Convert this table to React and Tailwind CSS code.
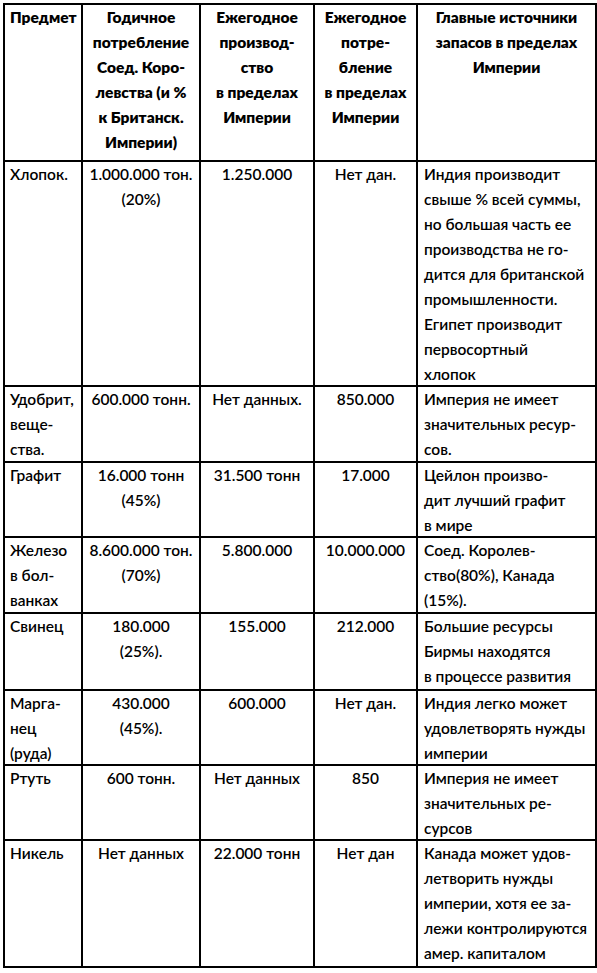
import React from 'react';

const head = [
  { lines: ['Предмет'], align: 'text-left pl-[5px]' },
  { lines: ['Годичное', 'потребление', 'Соед. Коро-', 'левства (и %', 'к Британск.', 'Империи)'], align: 'text-center' },
  { lines: ['Ежегодное', 'производ-', 'ство', 'в пределах', 'Империи'], align: 'text-center' },
  { lines: ['Ежегодное', 'потре-', 'бление', 'в пределах', 'Империи'], align: 'text-center' },
  { lines: ['Главные источники', 'запасов в пределах', 'Империи'], align: 'text-center' },
];

const rows = [
  {
    h: 'h-[225px]',
    cells: [
      ['Хлопок.'],
      ['1.000.000 тон.', '(20%)'],
      ['1.250.000'],
      ['Нет дан.'],
      ['Индия производит', 'свыше % всей суммы,', 'но большая часть ее', 'производства не го-', 'дится для британской', 'промышленности.', 'Египет производит', 'первосортный', 'хлопок'],
    ],
  },
  {
    h: 'h-[76px]',
    cells: [
      ['Удобрит,', 'веще-', 'ства.'],
      ['600.000 тонн.'],
      ['Нет данных.'],
      ['850.000'],
      ['Империя не имеет', 'значительных ресур-', 'сов.'],
    ],
  },
  {
    h: 'h-[75px]',
    cells: [
      ['Графит'],
      ['16.000 тонн', '(45%)'],
      ['31.500 тонн'],
      ['17.000'],
      ['Цейлон произво-', 'дит лучший графит', 'в мире'],
    ],
  },
  {
    h: 'h-[76px]',
    cells: [
      ['Железо', 'в бол-', 'ванках'],
      ['8.600.000 тон.', '(70%)'],
      ['5.800.000'],
      ['10.000.000'],
      ['Соед. Королев-', 'ство(80%), Канада', '(15%).'],
    ],
  },
  {
    h: 'h-[77px]',
    cells: [
      ['Свинец'],
      ['180.000', '(25%).'],
      ['155.000'],
      ['212.000'],
      ['Большие ресурсы', 'Бирмы находятся', 'в процессе развития'],
    ],
  },
  {
    h: 'h-[75px]',
    cells: [
      ['Марга-', 'нец', '(руда)'],
      ['430.000', '(45%).'],
      ['600.000'],
      ['Нет дан.'],
      ['Индия легко может', 'удовлетворять нужды', 'империи'],
    ],
  },
  {
    h: 'h-[75px]',
    cells: [
      ['Ртуть'],
      ['600 тонн.'],
      ['Нет данных'],
      ['850'],
      ['Империя не имеет', 'значительных ре-', 'сурсов'],
    ],
  },
  {
    h: 'h-[127px]',
    cells: [
      ['Никель'],
      ['Нет данных'],
      ['22.000 тонн'],
      ['Нет дан'],
      ['Канада может удов-', 'летворить нужды', 'империи, хотя ее за-', 'лежи контролируются', 'амер. капиталом'],
    ],
  },
];

const bodyAlign = ['text-left pl-[5px]', 'text-center', 'text-center', 'text-center', 'text-left pl-[6px]'];

// the scan's text boxes run slightly into the rules below them
function Lines({ lines }) {
  return (
    <div className="-mb-[4px]">
      {lines.map((l, i) => (
        <div key={i} className="whitespace-nowrap">
          {l}
        </div>
      ))}
    </div>
  );
}

export default function App() {
  return (
    <div className="min-h-screen bg-white pl-[3px] pt-[3px] text-black font-['Lato','Open_Sans',sans-serif] text-[15.5px] leading-[25px]">
      <table className="table-fixed border-collapse w-[592px]">
        <colgroup>
          <col className="w-[78px]" />
          <col className="w-[118px]" />
          <col className="w-[114px]" />
          <col className="w-[103px]" />
          <col className="w-[179px]" />
        </colgroup>
        <thead>
          <tr className="h-[157px]">
            {head.map((c, i) => (
              <th key={i} className={`border-2 border-black align-top p-0 font-extrabold ${c.align}`}>
                <Lines lines={c.lines} />
              </th>
            ))}
          </tr>
        </thead>
        <tbody>
          {rows.map((r, ri) => (
            <tr key={ri} className={r.h}>
              {r.cells.map((c, ci) => (
                <td key={ci} className={`border-2 border-black align-top p-0 font-semibold ${bodyAlign[ci]}`}>
                  <Lines lines={c} />
                </td>
              ))}
            </tr>
          ))}
        </tbody>
      </table>
    </div>
  );
}
